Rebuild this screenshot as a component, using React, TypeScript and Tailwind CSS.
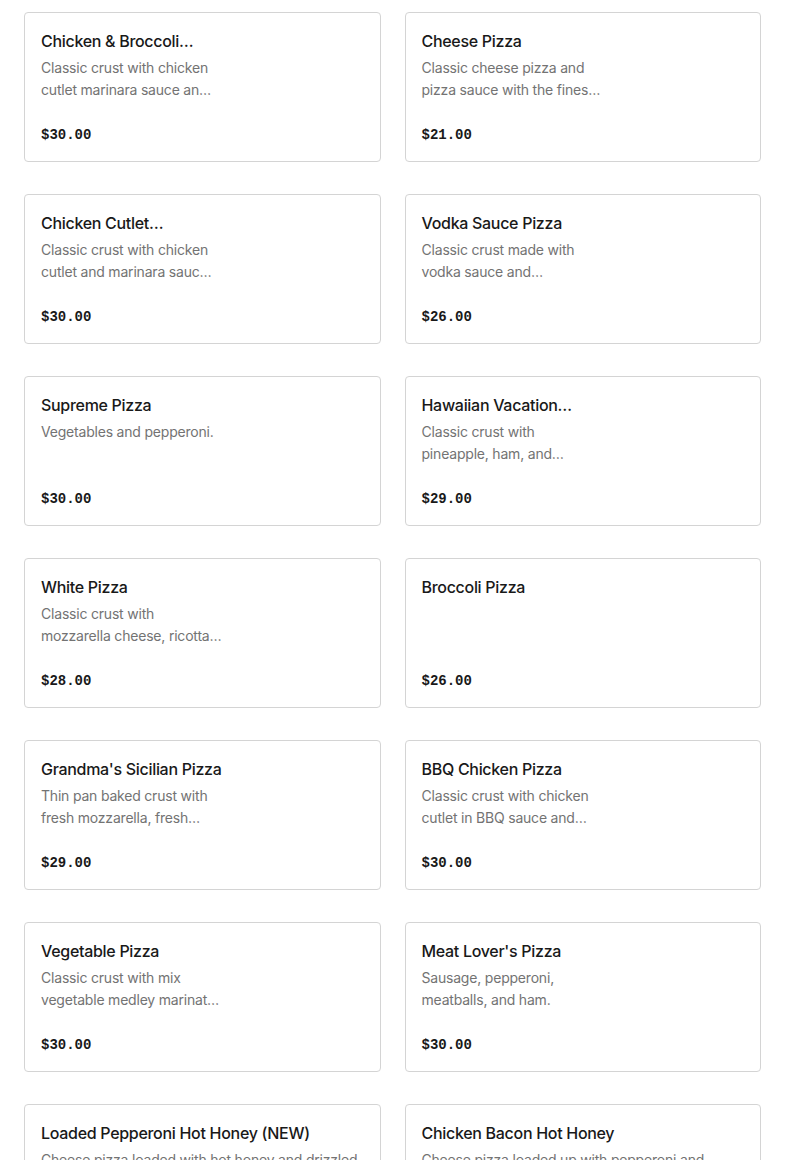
import React from "react";

type Item = {
  name: string;
  desc: string[];
  price: string;
};

const items: Item[] = [
  { name: "Chicken & Broccoli…", desc: ["Classic crust with chicken", "cutlet marinara sauce an…"], price: "$30.00" },
  { name: "Cheese Pizza", desc: ["Classic cheese pizza and", "pizza sauce with the fines…"], price: "$21.00" },
  { name: "Chicken Cutlet…", desc: ["Classic crust with chicken", "cutlet and marinara sauc…"], price: "$30.00" },
  { name: "Vodka Sauce Pizza", desc: ["Classic crust made with", "vodka sauce and…"], price: "$26.00" },
  { name: "Supreme Pizza", desc: ["Vegetables and pepperoni."], price: "$30.00" },
  { name: "Hawaiian Vacation…", desc: ["Classic crust with", "pineapple, ham, and…"], price: "$29.00" },
  { name: "White Pizza", desc: ["Classic crust with", "mozzarella cheese, ricotta…"], price: "$28.00" },
  { name: "Broccoli Pizza", desc: [], price: "$26.00" },
  { name: "Grandma's Sicilian Pizza", desc: ["Thin pan baked crust with", "fresh mozzarella, fresh…"], price: "$29.00" },
  { name: "BBQ Chicken Pizza", desc: ["Classic crust with chicken", "cutlet in BBQ sauce and…"], price: "$30.00" },
  { name: "Vegetable Pizza", desc: ["Classic crust with mix", "vegetable medley marinat…"], price: "$30.00" },
  { name: "Meat Lover's Pizza", desc: ["Sausage, pepperoni,", "meatballs, and ham."], price: "$30.00" },
  { name: "Loaded Pepperoni Hot Honey (NEW)", desc: ["Cheese pizza loaded with hot honey and drizzled", "with pepperoni cups."], price: "$32.00" },
  { name: "Chicken Bacon Hot Honey", desc: ["Cheese pizza loaded up with pepperoni and", "bacon and hot honey."], price: "$32.00" },
];

function Card({ item }: { item: Item }) {
  return (
    <div className="h-[150px] rounded-[4px] border border-[#d4d4d4] bg-white px-4 pt-4 pb-4 flex flex-col">
      <h3 className="text-[16px] leading-6 font-medium text-[#191919] font-['Inter',sans-serif] tracking-[-0.3px]">
        {item.name}
      </h3>
      <div className="mt-1 text-[14px] leading-[22px] text-[#737373] font-['Inter',sans-serif] tracking-[-0.2px]">
        {item.desc.map((line, i) => (
          <p key={i} className="whitespace-nowrap">
            {line}
          </p>
        ))}
      </div>
      <p className="mt-auto text-[14px] leading-5 font-bold text-[#191919] font-['Liberation_Mono',monospace]">
        {item.price}
      </p>
    </div>
  );
}

export default function App(): JSX.Element {
  return (
    <div className="h-[1160px] overflow-hidden bg-white">
      <div className="grid grid-cols-2 gap-x-6 gap-y-8 px-6 pt-3">
        {items.map((item, index) => (
          <Card key={index} item={item} />
        ))}
      </div>
    </div>
  );
}
